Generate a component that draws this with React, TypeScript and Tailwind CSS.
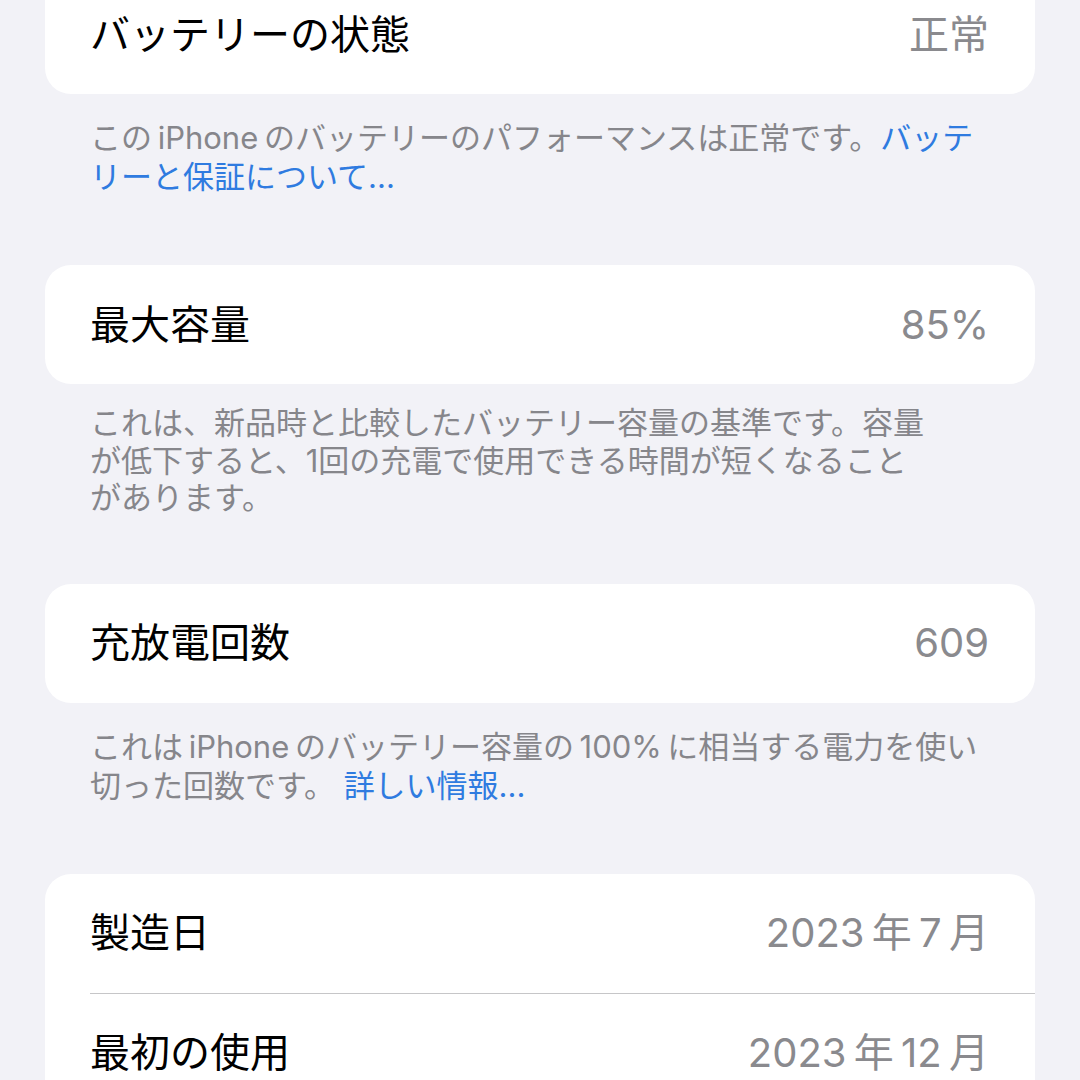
const font = { fontFamily: '"Inter", "Noto Sans CJK JP", sans-serif' };

function Row({ label, value }: { label: string; value: string }) {
  return (
    <div className="flex h-[119px] items-center justify-between pl-[45px] pr-[46px]">
      <span className="text-[40px] leading-none text-black">{label}</span>
      <span className="text-[40px] leading-none text-[#8a8a8e]">{value}</span>
    </div>
  );
}

function Footer({ children, tight }: { children: React.ReactNode; tight?: boolean }) {
  return (
    <div
      className={
        tight
          ? 'px-[90px] pt-[20px] pb-[67px] text-[31px] leading-[37.5px] text-[#86868b]'
          : 'px-[90px] pt-[24px] pb-[69px] text-[31px] leading-[39px] text-[#86868b]'
      }
    >
      {children}
    </div>
  );
}

export default function App() {
  return (
    <div className="h-[1080px] w-[1080px] overflow-hidden bg-[#f2f2f7]" style={font}>
      <div className="-mt-[25px]">
        <div className="mx-[45px] rounded-[26px] bg-white">
          <Row label="バッテリーの状態" value="正常" />
        </div>
        <Footer>
          この{'\u2009'}iPhone{'\u2009'}のバッテリーのパフォーマンスは正常です。<span className="text-[#2f7be0]">バッテ</span>
          <br />
          <span className="text-[#2f7be0]">リーと保証について...</span>
        </Footer>

        <div className="mx-[45px] rounded-[26px] bg-white">
          <Row label="最大容量" value="85%" />
        </div>
        <Footer tight>
          これは、新品時と比較したバッテリー容量の基準です。容量
          <br />
          が低下すると、1回の充電で使用できる時間が短くなること
          <br />
          があります。
        </Footer>

        <div className="mx-[45px] rounded-[26px] bg-white">
          <Row label="充放電回数" value="609" />
        </div>
        <Footer>
          これは{'\u2009'}iPhone{'\u2009'}のバッテリー容量の{'\u2009'}100%{'\u2009'}に相当する電力を使い
          <br />
          切った回数です。 <span className="text-[#2f7be0]">詳しい情報...</span>
        </Footer>

        <div className="mx-[45px] rounded-[26px] bg-white">
          <Row label="製造日" value={'2023\u2009年\u20097\u2009月'} />
          <div className="ml-[45px] h-px bg-[#c6c6c8]" />
          <Row label="最初の使用" value={'2023\u2009年\u200912\u2009月'} />
        </div>
      </div>
    </div>
  );
}
